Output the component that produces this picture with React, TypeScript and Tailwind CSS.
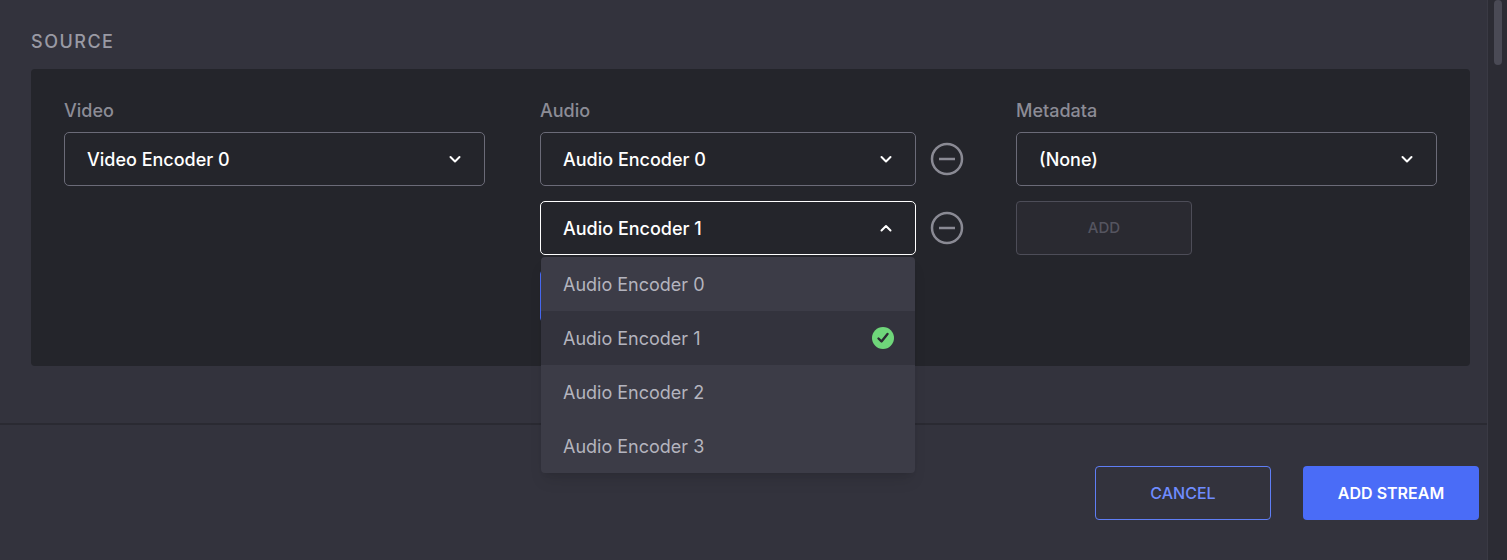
import React from 'react';

const Chevron = ({ up }: { up?: boolean }) => (
  <svg width="14" height="14" viewBox="0 0 14 14" fill="none" stroke="white" strokeWidth="2" strokeLinecap="round" strokeLinejoin="round">
    {up ? <path d="M2.5 9.5 7 5l4.5 4.5" /> : <path d="M2.5 5 7 9.5 11.5 5" />}
  </svg>
);

const Minus = () => (
  <svg width="34" height="34" viewBox="0 0 34 34" fill="none" stroke="#8a8a94" strokeWidth="2.5">
    <circle cx="17" cy="17" r="15" />
    <path d="M9 17h16" />
  </svg>
);

const Select = ({ value, open, width }: { value: string; open?: boolean; width: string }) => (
  <div className={`${width} h-[54px] rounded-[5px] border ${open ? 'border-white' : 'border-[#6b6b78]'} bg-[#24252b] flex items-center justify-between pl-[22px] pr-[22px] text-white text-[18px] font-medium`}>
    <span>{value}</span>
    <Chevron up={open} />
  </div>
);

const options = ['Audio Encoder 0', 'Audio Encoder 1', 'Audio Encoder 2', 'Audio Encoder 3'];

export default function App() {
  return (
    <div className="w-[1507px] h-[560px] bg-[#33333d] flex overflow-hidden" style={{ fontFamily: 'Inter, "Noto Sans", sans-serif' }}>
      <div className="flex-1 flex flex-col">
        <div className="h-[425px] border-b-2 border-[#2a2a32] pl-[31px] pr-[17px] pt-[30px]">
          <div className="text-[#9a9aa4] text-[18px] font-medium tracking-[1.5px] leading-[24px] mb-[15px]">SOURCE</div>
          <div className="bg-[#24252b] rounded-[4px] h-[297px] pl-[33px] pt-[30px] flex">
            <div className="w-[476px]">
              <div className="text-[#8c8c96] text-[18px] font-medium leading-[24px] mb-[9px]">Video</div>
              <Select value="Video Encoder 0" width="w-[421px]" />
            </div>
            <div className="w-[476px]">
              <div className="text-[#8c8c96] text-[18px] font-medium leading-[24px] mb-[9px]">Audio</div>
              <div className="flex items-center gap-[14px]">
                <Select value="Audio Encoder 0" width="w-[376px]" />
                <Minus />
              </div>
              <div className="flex items-center gap-[14px] mt-[15px] relative">
                <Select value="Audio Encoder 1" open width="w-[376px]" />
                <Minus />
                <div className="absolute left-0 top-[69px] w-[176px] h-[52px] border border-[#4a6cf7] rounded-[4px]" />
                <div className="absolute left-[1px] top-[56px] w-[374px] bg-[#3c3c47] rounded-[4px] shadow-lg overflow-hidden z-10">
                  {options.map((o, i) => (
                    <div key={o} className={`h-[54px] flex items-center justify-between pl-[22px] pr-[21px] text-[18px] text-[#b4b4be] ${i === 1 ? 'bg-[#33333d]' : ''}`}>
                      <span>{o}</span>
                      {i === 1 && (
                        <svg width="22" height="22" viewBox="0 0 22 22">
                          <circle cx="11" cy="11" r="11" fill="#6fd67a" />
                          <path d="M6.5 11.5 9.5 14.5 15.5 7" stroke="#2b2b33" strokeWidth="2.4" fill="none" strokeLinecap="round" strokeLinejoin="round" />
                        </svg>
                      )}
                    </div>
                  ))}
                </div>
              </div>
            </div>
            <div>
              <div className="text-[#8c8c96] text-[18px] font-medium leading-[24px] mb-[9px]">Metadata</div>
              <Select value="(None)" width="w-[421px]" />
              <div className="mt-[15px] w-[176px] h-[54px] border border-[#4d4d58] bg-[#2a2a31] rounded-[4px] flex items-center justify-center text-[#555560] text-[15px] font-medium">ADD</div>
            </div>
          </div>
        </div>
        <div className="flex-1 flex justify-end items-start pt-[41px] pr-[8px] gap-[32px]">
          <button className="w-[176px] h-[54px] border border-[#5f7ef5] rounded-[4px] text-[#6f8cff] text-[16px] font-medium">CANCEL</button>
          <button className="w-[176px] h-[54px] bg-[#4a6cf7] rounded-[4px] text-white text-[16px] font-semibold">ADD STREAM</button>
        </div>
      </div>
      <div className="w-[20px] bg-[#2c2c34] flex justify-center border-l border-[#3a3a44]">
        <div className="w-[8px] h-[65px] bg-[#4a4a55] rounded-full" />
      </div>
    </div>
  );
}
